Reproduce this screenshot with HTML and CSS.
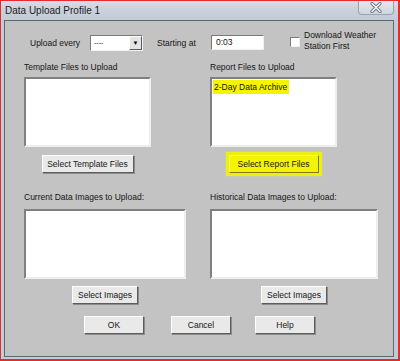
FILE: index.html
```html
<!DOCTYPE html>
<html>
    <head>
        <meta charset="utf-8" />
        <title>Data Upload Profile 1</title>
        <link rel="stylesheet" href="styles.css">
    </head>
    <body>
        <div class="shot">
            <div class="window">
                <div class="titlebar">
                    <span class="title">Data Upload Profile 1</span>
                    <span class="close">
                        <svg width="14" height="11" viewBox="0 0 14 11">
                            <path d="M3 1.5 L11 9.5 M11 1.5 L3 9.5" stroke="#6f7a88" stroke-width="3.2" stroke-linecap="round"/>
                            <path d="M3 1.5 L11 9.5 M11 1.5 L3 9.5" stroke="#f4f6f9" stroke-width="1.4" stroke-linecap="round"/>
                        </svg>
                    </span>
                </div>
                <div class="client">
                    <div class="toprow">
                        <span class="lbl lbl-every">Upload every</span>
                        <span class="combo"><span class="combo-text">----</span><span class="combo-btn">&#9660;</span></span>
                        <span class="lbl lbl-start">Starting at</span>
                        <span class="edit">0:03</span>
                        <span class="check"></span>
                        <span class="check-text">Download Weather<br/>Station First</span>
                    </div>
                    <div class="groups">
                        <div class="group first">
                            <div class="glabel">Template Files to Upload</div>
                            <div class="listbox narrow"></div>
                            <div class="btn wide-btn">Select Template Files</div>
                        </div>
                        <div class="group first">
                            <div class="glabel">Report Files to Upload</div>
                            <div class="listbox narrow">
                                <span class="item hilite">2-Day Data Archive</span>
                            </div>
                            <div class="btn report-btn">Select Report Files</div>
                        </div>
                        <div class="group second">
                            <div class="glabel">Current Data Images to Upload:</div>
                            <div class="listbox broad-l"></div>
                            <div class="btn img-btn">Select Images</div>
                        </div>
                        <div class="group second">
                            <div class="glabel">Historical Data Images to Upload:</div>
                            <div class="listbox broad-r"></div>
                            <div class="btn img-btn">Select Images</div>
                        </div>
                    </div>
                    <div class="actions">
                        <div class="btn act">OK</div>
                        <div class="btn act">Cancel</div>
                        <div class="btn act">Help</div>
                    </div>
                </div>
            </div>
        </div>
    </body>
</html>
```

FILE: styles.css
```css
html, body {
    margin:     0;
    padding:    0;
}
body {
    font-family:    "Liberation Sans", Arial, sans-serif;
    font-size:      8.5px;
    color:          #151515;
    background:     #c8d1dc;
}
.shot {
    width:          400px;
    height:         361px;
    box-sizing:     border-box;
    border:         1px solid #ea2a2a;
    border-right-width:     2px;
    border-bottom-width:    2px;
    overflow:       hidden;
}
.window {
    height:         100%;
    display:        flex;
    flex-direction: column;
    padding:        0 4px 2px 3px;
    box-sizing:     border-box;
    background:     linear-gradient(180deg, #d9dee5 0px, #cbd2dc 8px, #c3cbd7 18px);
}
.titlebar {
    height:         19px;
    display:        flex;
    align-items:    flex-start;
}
.title {
    font-size:      10px;
    color:          #1c1c1c;
    margin:         4px 0 0 1px;
}
.close {
    margin-left:    auto;
    width:          36px;
    height:         14px;
    box-sizing:     border-box;
    border:         1px solid #98a3b1;
    border-top:     none;
    border-radius:  0 0 4px 4px;
    background:     linear-gradient(180deg, #e4e8ee, #cfd6df);
    display:        flex;
    align-items:    center;
    justify-content: center;
}
.client {
    flex:           1;
    background:     #c3c3c3;
    border:         1px solid #5f6770;
    display:        flex;
    flex-direction: column;
}

/* top row */
.toprow {
    display:        flex;
    align-items:    center;
    margin:         13px 0 0 25px;
    height:         17px;
}
.lbl-every {
    width:          60px;
}
.lbl-start {
    width:          54px;
    margin-left:    14px;
}
.combo {
    width:          53px;
    height:         16px;
    box-sizing:     border-box;
    background:     #fff;
    border:         1px solid;
    border-color:   #7a7a7a #f2f2f2 #f2f2f2 #7a7a7a;
    display:        flex;
    align-items:    stretch;
}
.combo-text {
    flex:           1;
    padding-left:   3px;
    line-height:    13px;
    font-size:      7px;
}
.combo-btn {
    width:          11px;
    background:     #e4e4e4;
    border:         1px solid;
    border-color:   #fff #5a5a5a #5a5a5a #fff;
    font-size:      6px;
    text-align:     center;
    line-height:    12px;
    color:          #000;
}
.edit {
    width:          53px;
    height:         15px;
    box-sizing:     border-box;
    background:     #fff;
    border:         1px solid;
    border-color:   #7a7a7a #f2f2f2 #f2f2f2 #7a7a7a;
    padding-left:   4px;
    line-height:    13px;
}
.check {
    width:          10px;
    height:         10px;
    box-sizing:     border-box;
    margin-left:    26px;
    background:     #fff;
    border:         1px solid;
    border-color:   #7a7a7a #efefef #efefef #7a7a7a;
    align-self:     flex-start;
    margin-top:     3px;
}
.check-text {
    margin-left:    4px;
    line-height:    11px;
    align-self:     flex-start;
    margin-top:     -4px;
}

/* file groups */
.groups {
    display:        grid;
    grid-template-columns: 186px 186px;
    margin-left:    19px;
}
.group {
    display:        flex;
    flex-direction: column;
    align-items:    flex-start;
    justify-self:   start;
}
.glabel {
    line-height:    10px;
}
.group.first {
    margin-top:     11px;
}
.group.second {
    margin-top:     19px;
}
.listbox {
    height:         70px;
    box-sizing:     border-box;
    background:     #fff;
    border:         2px solid;
    border-color:   #808080 #eeeeee #eeeeee #808080;
    margin-top:     5px;
    padding:        1px 1px;
}
.group.second .listbox {
    margin-top:     7px;
}
.listbox.narrow {
    width:          127px;
}
.listbox.broad-l {
    width:          162px;
}
.listbox.broad-r {
    width:          168px;
}
.item {
    display:        inline-block;
    line-height:    14px;
    padding:        0 2px 0 1px;
}
.hilite {
    background:     #f4f400;
}

/* buttons */
.btn {
    height:         18px;
    box-sizing:     border-box;
    background:     #e9e9e9;
    border:         1px solid;
    border-color:   #ffffff #5c5c5c #5c5c5c #ffffff;
    box-shadow:     1px 1px 0 #8d8d8d;
    text-align:     center;
    line-height:    16px;
}
.group .btn {
    align-self:     center;
    margin-top:     8px;
}
.group.second .btn {
    margin-top:     7px;
}
.wide-btn {
    width:          92px;
}
.report-btn {
    width:          90px;
    background:     #f4f400;
    border-color:   #f8f860 #7a7a20 #7a7a20 #f8f860;
    box-shadow:     0 0 1px 3px #eeee10;
}
.img-btn {
    width:          66px;
}
.actions {
    display:        flex;
    margin:         12px 0 0 79px;
}
.act {
    width:          60px;
}
.act + .act {
    margin-left:    27px;
}
.act:last-child {
    margin-left:    24px;
}
```
